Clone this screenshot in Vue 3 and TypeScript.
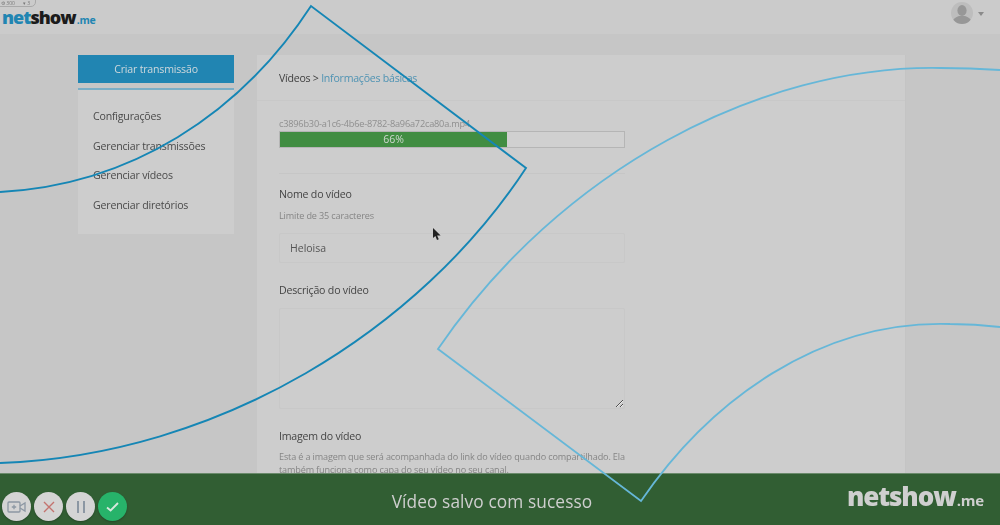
<script setup lang="ts">
const navItems: string[] = [
  'Configurações',
  'Gerenciar transmissões',
  'Gerenciar vídeos',
  'Gerenciar diretórios',
]
const progress = 66
</script>

<template>
  <div class="page">
    <div class="blurred">
      <header class="topbar">
        <div class="logo"><span class="blue">net</span>show<small class="blue">.me</small></div>
        <div class="user">
          <svg class="avatar" width="22" height="22" viewBox="0 0 22 22">
            <defs>
              <clipPath id="avatar-clip"><circle cx="11" cy="11" r="11" /></clipPath>
            </defs>
            <circle cx="11" cy="11" r="11" fill="#bdbdbd" />
            <g clip-path="url(#avatar-clip)" fill="#979797">
              <ellipse cx="11" cy="8.5" rx="4.6" ry="5.4" />
              <path d="M1 22c0-5 4-7 7-8h6c3 1 7 3 7 8z" />
            </g>
          </svg>
          <span class="caret"></span>
        </div>
      </header>

      <div class="content">
        <aside class="sidebar">
          <button class="create-btn">Criar transmissão</button>
          <nav class="nav">
            <a v-for="item in navItems" :key="item" class="nav-item">{{ item }}</a>
          </nav>
        </aside>

        <main class="panel">
          <div class="crumbs">Vídeos &gt; <span class="crumb-link">Informações básicas</span></div>
          <div class="form">
            <div class="filename">c3896b30-a1c6-4b6e-8782-8a96a72ca80a.mp4</div>
            <div class="progress">
              <div class="progress-fill" :style="{ width: progress + '%' }">{{ progress }}%</div>
            </div>
            <hr class="divider" />
            <label class="label">Nome do vídeo</label>
            <p class="hint">Limite de 35 caracteres</p>
            <input class="field" value="Heloisa" readonly />
            <label class="label desc-label">Descrição do vídeo</label>
            <textarea class="field area" readonly></textarea>
            <label class="label image-label">Imagem do vídeo</label>
            <p class="hint image-hint">
              Esta é a imagem que será acompanhada do link do vídeo quando compartilhado. Ela
              também funciona como capa do seu vídeo no seu canal.
            </p>
          </div>
        </main>
      </div>

      <div class="chip"><span>⚙ 300</span><span>▾ 3</span></div>

      <svg class="cursor" width="10" height="14" viewBox="0 0 10 14">
        <path d="M1 0v10l2.4-2 1.6 4 1.8-.8-1.7-3.8H8.6z" fill="#222" />
      </svg>

      <footer class="notice">
        <div class="actions">
          <span class="round">
            <svg width="20" height="14" viewBox="0 0 20 14" fill="none" stroke="#8c97a3" stroke-width="1.3">
              <rect x="1" y="2" width="12" height="10" rx="1" />
              <path d="M7 4.8v4.4M4.8 7h4.4M13 6l5-3v8l-5-3" />
            </svg>
          </span>
          <span class="round">
            <svg width="12" height="12" viewBox="0 0 12 12" fill="none" stroke="#c4736f" stroke-width="1.4">
              <path d="M1 1l10 10M11 1L1 11" />
            </svg>
          </span>
          <span class="round">
            <svg width="10" height="14" viewBox="0 0 10 14" fill="none" stroke="#8c97a3" stroke-width="2">
              <path d="M2 1v12M8 1v12" />
            </svg>
          </span>
          <span class="round done">
            <svg width="13" height="10" viewBox="0 0 13 10" fill="none" stroke="#d8e8de" stroke-width="1.8">
              <path d="M1 5.5l3.6 3L12 1" />
            </svg>
          </span>
        </div>
        <div class="notice-text">Vídeo salvo com sucesso</div>
        <div class="logo logo-light">netshow<small>.me</small></div>
      </footer>
    </div>

    <svg class="strokes" width="1000" height="525" viewBox="0 0 1000 525" fill="none">
      <path
        d="M0 192C130 185 240 115 311 6L526 168C420 330 220 455 0 463"
        stroke="#1586b5"
        stroke-width="1.9"
      />
      <path
        d="M1000 70Q970 68 940 68C760 65 560 170 438 349L641 501C710 400 820 320 950 324Q975 324 1000 327"
        stroke="#66b7d8"
        stroke-width="1.8"
      />
    </svg>
  </div>
</template>

<style>
html,
body {
  margin: 0;
  background: #c6c6c6;
}
</style>

<style scoped>
.page {
  position: relative;
  width: 1000px;
  height: 525px;
  overflow: hidden;
  background: #c6c6c6;
  font-family: "Open Sans", sans-serif;
  color: #4d4d4d;
}

.blurred {
  height: 100%;
  filter: blur(0.6px);
}

.topbar {
  height: 34px;
  display: flex;
  align-items: flex-start;
  justify-content: space-between;
  background: #cbcbcb;
  padding: 0 16px 0 2px;
}

.logo {
  font-family: "Open Sans", sans-serif;
  font-weight: 800;
  font-size: 18px;
  line-height: 24px;
  letter-spacing: -1px;
  margin-top: 5px;
  color: #1b1b1b;
}

.logo small {
  font-size: 10.5px;
  font-weight: 700;
  letter-spacing: -0.2px;
  margin-left: 1px;
}

.blue {
  color: #2185b2;
}

.user {
  display: flex;
  align-items: center;
  gap: 5px;
  margin-top: 2px;
}

.caret {
  width: 0;
  height: 0;
  border-left: 3.5px solid transparent;
  border-right: 3.5px solid transparent;
  border-top: 4px solid #8a8a8a;
  margin-top: 2px;
}

.content {
  display: flex;
  align-items: flex-start;
  padding: 21px 0 0 78px;
  gap: 23px;
}

.sidebar {
  width: 156px;
}

.create-btn {
  display: block;
  width: 100%;
  height: 28px;
  border: 0;
  background: #2185b2;
  color: #cfd8dc;
  font: 10.6px "Open Sans", sans-serif;
  letter-spacing: -0.2px;
  padding: 0;
}

.nav {
  margin-top: 5px;
  padding: 11px 0 0 15px;
  border-top: 2px solid #7aaec6;
  background: #cdcdcd;
  display: flex;
  flex-direction: column;
  height: 146px;
  box-sizing: border-box;
}

.nav-item {
  height: 29.7px;
  line-height: 30px;
  font-size: 10.6px;
  letter-spacing: -0.2px;
  color: #4a4a4a;
}

.panel {
  width: 649px;
  height: 470px;
  background: #cdcdcd;
  border-right: 1px solid #c4c4c4;
  box-sizing: border-box;
}

.crumbs {
  height: 46px;
  box-sizing: border-box;
  padding: 15px 0 0 22px;
  font-size: 10.6px;
  letter-spacing: -0.25px;
  line-height: 16px;
  color: #3f3f3f;
  border-bottom: 1px solid #c8c8c8;
}

.crumb-link {
  color: #4f93b3;
}

.form {
  width: 346px;
  margin-left: 22px;
}

.filename {
  margin-top: 16px;
  font-size: 9.2px;
  letter-spacing: -0.2px;
  line-height: 14px;
  color: #8f8f8f;
}

.progress {
  height: 17px;
  box-sizing: border-box;
  border: 1px solid #b5b5b5;
  background: #d0d0d0;
}

.progress-fill {
  height: 100%;
  background: #418d42;
  color: #cfd8cf;
  font-size: 10.5px;
  line-height: 15px;
  text-align: center;
}

.divider {
  border: 0;
  border-top: 1px solid #c6c6c6;
  margin: 25px 0 0;
}

.label {
  display: block;
  margin-top: 12px;
  font-size: 10.6px;
  letter-spacing: -0.2px;
  line-height: 16px;
  color: #444;
}

.hint {
  margin: 7px 0 0;
  font-size: 9.1px;
  letter-spacing: -0.15px;
  line-height: 13px;
  color: #858585;
}

.field {
  display: block;
  width: 100%;
  box-sizing: border-box;
  margin-top: 11px;
  height: 30px;
  padding: 0 10px;
  border: 1px solid #c8c8c8;
  border-radius: 2px;
  background: #cdcdcd;
  outline: none;
  font: 10.5px "Open Sans", sans-serif;
  color: #555;
}

.desc-label {
  margin-top: 19px;
}

.area {
  margin-top: 10px;
  height: 101px;
  resize: vertical;
}

.image-label {
  margin-top: 19px;
}

.image-hint {
  margin-top: 6px;
}

.chip {
  position: absolute;
  left: -6px;
  top: -12px;
  width: 42px;
  height: 19px;
  display: flex;
  align-items: flex-end;
  justify-content: space-between;
  box-sizing: border-box;
  padding: 0 5px 0 6px;
  border: 1px solid #a9a9a9;
  border-radius: 5px;
  font-size: 5px;
  line-height: 6px;
  color: #777;
}

.cursor {
  position: absolute;
  left: 432px;
  top: 228px;
}

.notice {
  position: absolute;
  left: 0;
  right: 0;
  bottom: 0;
  height: 52px;
  background: #315e33;
  border-top: 1px solid #6a8a6b;
  box-sizing: border-box;
  display: flex;
  align-items: center;
  color: #cfcfcf;
}

.actions {
  display: flex;
  gap: 3px;
  margin: 14px 0 0 2px;
  width: 130px;
}

.round {
  width: 29px;
  height: 29px;
  border-radius: 50%;
  background: #d4d4d4;
  display: flex;
  align-items: center;
  justify-content: center;
  box-shadow: 0 1px 2px rgba(0, 0, 0, 0.25);
}

.done {
  background: #27b36a;
}

.notice-text {
  position: absolute;
  left: 0;
  right: 16px;
  top: 16px;
  text-align: center;
  font-size: 17.3px;
  line-height: 24px;
  letter-spacing: 0.1px;
}

.logo-light {
  position: absolute;
  right: 16px;
  top: 4px;
  margin: 0;
  color: #cfcfcf;
  font-size: 26px;
  line-height: 36px;
  letter-spacing: -1.1px;
}

.logo-light small {
  font-size: 15px;
  letter-spacing: -0.2px;
}

.strokes {
  position: absolute;
  left: 0;
  top: 0;
  pointer-events: none;
}
</style>
